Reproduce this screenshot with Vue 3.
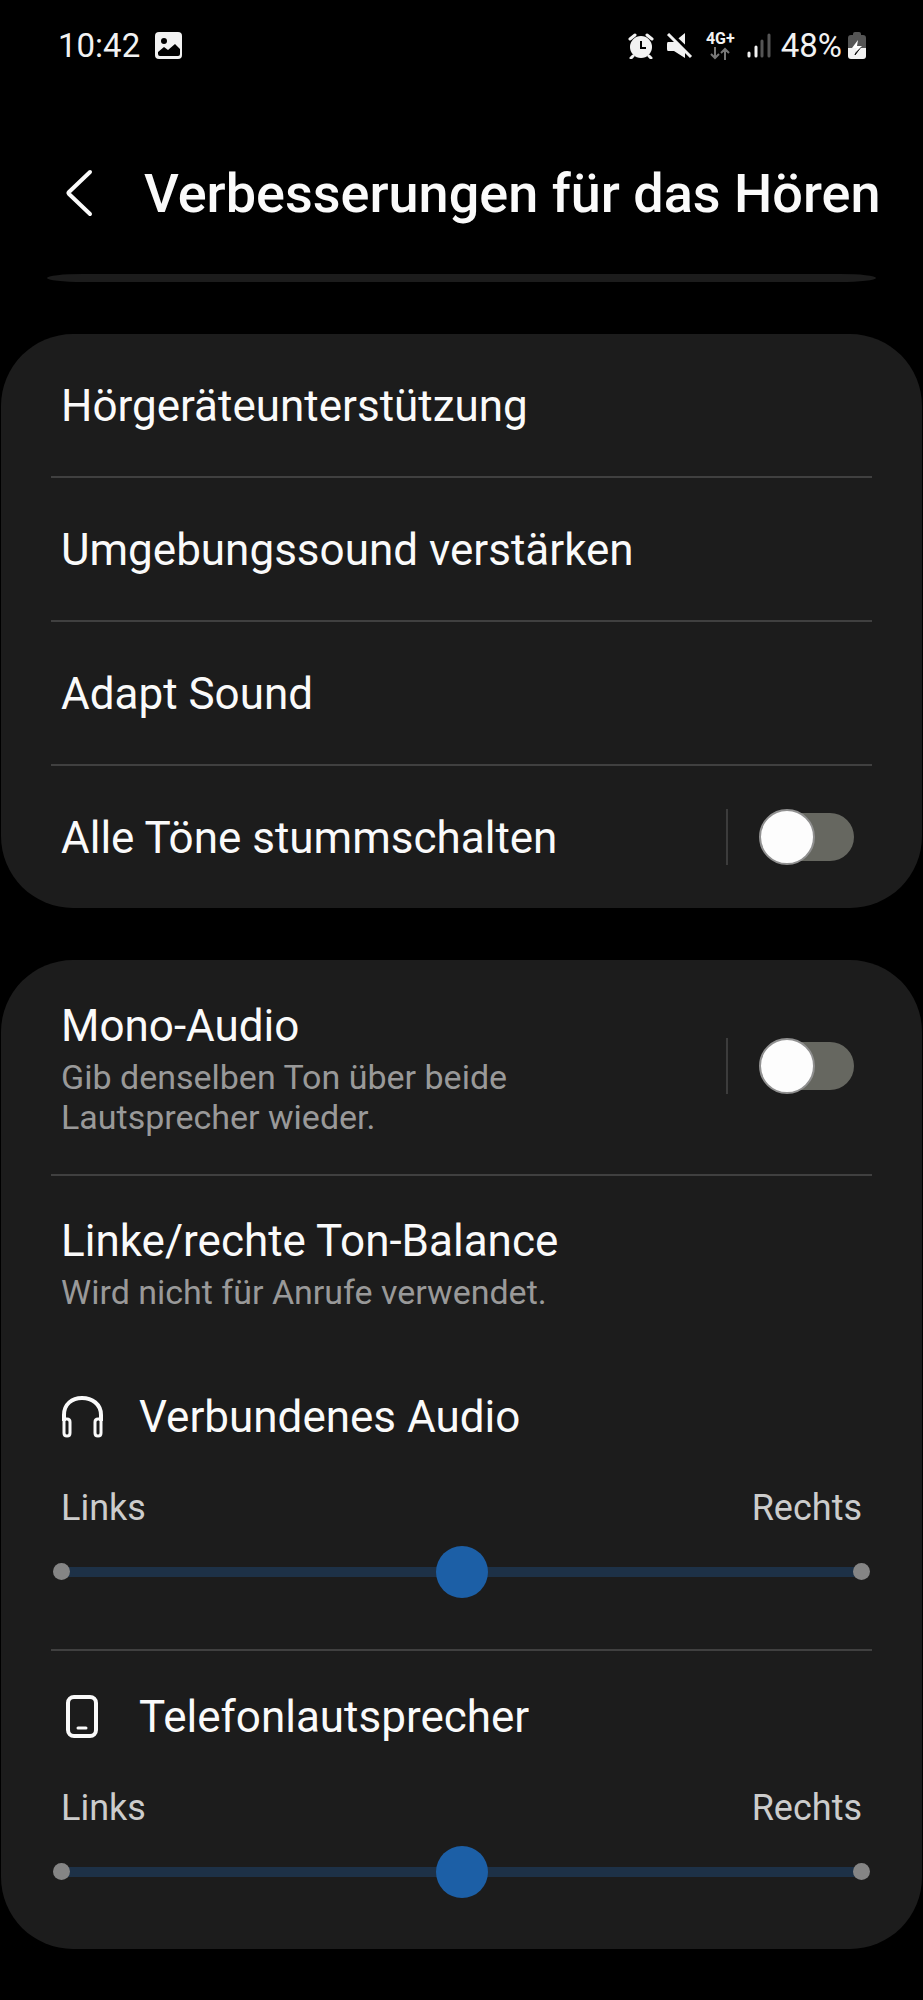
<script setup>
import { ref } from 'vue'

const links = ['Hörgeräteunterstützung', 'Umgebungssound verstärken', 'Adapt Sound']
const muteAll = ref(false)
const mono = ref(false)
const balances = ref([
  { id: 'audio', title: 'Verbundenes Audio', value: 50 },
  { id: 'phone', title: 'Telefonlautsprecher', value: 50 }
])
</script>

<template>
  <div class="page">
    <div class="status">
      <time class="clock">10:42</time>
      <svg class="picture" width="28" height="28" viewBox="0 0 28 28" aria-hidden="true">
        <rect x="0" y="0" width="27" height="27" rx="4" fill="#f2f2f2" />
        <circle cx="9" cy="9" r="3" fill="#000" />
        <path d="M3 20 L9 15 L13 18 L20 12 L25 17 V22 Q25 24 23 24 H5 Q3 24 3 22 Z" fill="#000" />
      </svg>
      <div class="indicators">
        <svg width="26" height="26" viewBox="0 0 26 26" aria-hidden="true">
          <circle cx="13" cy="14" r="11" fill="#f2f2f2" />
          <path d="M2 6 L7 2 M24 6 L19 2 M5 23 L3 25 M21 23 L23 25" stroke="#f2f2f2" stroke-width="3" stroke-linecap="round" />
          <path d="M13 8 V15 H18" fill="none" stroke="#000" stroke-width="2" />
        </svg>
        <svg width="28" height="26" viewBox="0 0 28 26" aria-hidden="true">
          <path d="M2 9 H8 L19 0 V25 L8 18 H2 Q1 18 1 16 V11 Q1 9 2 9 Z" fill="#f2f2f2" />
          <path d="M4 0 L28 23" stroke="#000" stroke-width="4" />
          <path d="M2 1 L25 24" stroke="#f2f2f2" stroke-width="3" />
        </svg>
        <div class="network">
          <span>4G+</span>
          <svg width="20" height="13" viewBox="0 0 20 13" fill="none" stroke="#777" stroke-width="2" aria-hidden="true">
            <path d="M5 0 V11 M1 7 L5 11 L9 7 M15 13 V2 M11 6 L15 2 L19 6" />
          </svg>
        </div>
        <svg width="24" height="26" viewBox="0 0 24 26" stroke-width="3" stroke-linecap="round" aria-hidden="true">
          <path d="M2 20 V23 M9 14 V23" stroke="#f2f2f2" />
          <path d="M15 8 V23 M22 2 V23" stroke="#555" />
        </svg>
        <span class="percent">48%</span>
        <svg width="18" height="28" viewBox="0 0 18 28" aria-hidden="true">
          <path d="M5 3 V2 Q5 0 7 0 H11 Q13 0 13 2 V3 H15 Q18 3 18 6 V17 H0 V6 Q0 3 3 3 Z" fill="#555" />
          <path d="M0 16 H18 V24 Q18 27 15 27 H3 Q0 27 0 24 Z" fill="#f2f2f2" />
          <path d="M13 15 L7 23 L9 18 Z" fill="#111" stroke="#111" stroke-width="1" />
          <path d="M10 8 L4 16 H9 L7 21 L14 14 H9 Z" fill="#fff" />
        </svg>
      </div>
    </div>

    <header class="header">
      <button class="back" type="button" aria-label="Zurück">
        <svg width="28" height="50" viewBox="0 0 28 50" fill="none" stroke="#fafafa" stroke-width="4" stroke-linecap="round" stroke-linejoin="round" aria-hidden="true">
          <path d="M25 4 L4 24 Q3 25 4 26 L25 46" />
        </svg>
      </button>
      <h1>Verbesserungen für das Hören</h1>
    </header>

    <main>
      <div class="sliver"></div>

      <section class="card">
        <a v-for="item in links" :key="item" class="row line" href="#"><span class="text">{{ item }}</span></a>
        <div class="row">
          <label class="text" for="mute">Alle Töne stummschalten</label>
          <div class="switch"><input id="mute" v-model="muteAll" type="checkbox" role="switch"></div>
        </div>
      </section>

      <section class="card">
        <div class="row tall line">
          <div class="text">
            <label for="mono">Mono-Audio</label>
            <p>Gib denselben Ton über beide Lautsprecher wieder.</p>
          </div>
          <div class="switch"><input id="mono" v-model="mono" type="checkbox" role="switch"></div>
        </div>
        <div class="intro">
          <h2>Linke/rechte Ton-Balance</h2>
          <p>Wird nicht für Anrufe verwendet.</p>
        </div>
        <div v-for="(b, i) in balances" :key="b.id" class="balance" :class="{ line: i === 0 }">
          <label class="heading" :for="b.id">
            <svg v-if="b.id === 'audio'" width="44" height="44" viewBox="0 0 44 44" fill="none" stroke="#fafafa" stroke-width="3" aria-hidden="true">
              <path d="M3 26 V20 C3 9 11 3 21 3 S40 9 40 20 V26" stroke-width="4" />
              <path d="M3 24 H6 Q9 24 9 27 V38 Q9 41 6 41 Q3 41 3 38 Z M40 24 H37 Q34 24 34 27 V38 Q34 41 37 41 Q40 41 40 38 Z" />
            </svg>
            <svg v-else width="44" height="44" viewBox="0 0 44 44" fill="none" stroke="#fafafa" stroke-width="4" aria-hidden="true">
              <rect x="7" y="2" width="28" height="39" rx="6" />
              <path d="M17 33 H25" stroke-width="3" stroke-linecap="round" />
            </svg>
            {{ b.title }}
          </label>
          <div class="ends"><span>Links</span><span>Rechts</span></div>
          <div class="slider"><input :id="b.id" v-model="b.value" type="range" min="0" max="100"></div>
        </div>
      </section>
    </main>
  </div>
</template>

<style>
html, body { background: #000; }
</style>

<style scoped>
.page {
  box-sizing: border-box;
  min-height: 100vh;
  padding-bottom: 50px;
  background: #000;
  color: #fafafa;
  font-family: Roboto, "Liberation Sans", sans-serif;
  font-size: 44px;
  line-height: 52px;
}
h1, h2, p { margin: 0; font-weight: 400; font-size: inherit; }
svg { display: block; flex: none; }

.status {
  display: flex;
  align-items: center;
  height: 92px;
  padding: 0 57px 0 58px;
  color: #f2f2f2;
  font-size: 33px;
  line-height: 40px;
}
.picture { margin-left: 15px; }
.indicators { display: flex; align-items: center; margin-left: auto; }
.indicators > * + * { margin-left: 12px; }
.indicators > .percent { margin-left: 10px; }
.indicators > .percent + svg { margin-left: 6px; }
.network { display: flex; flex-direction: column; align-items: center; gap: 2px; }
.network span { font-size: 16px; line-height: 13px; font-weight: 700; }

.header {
  display: flex;
  align-items: center;
  height: 162px;
  margin-top: 20px;
  padding-left: 65px;
}
.back { padding: 0; border: 0; background: none; color: inherit; }
h1 { margin-left: 51px; padding-top: 2px; font-size: 54px; line-height: 64px; font-weight: 500; white-space: nowrap; }

.sliver {
  height: 8px;
  margin: 0 47px;
  border-radius: 36px / 4px;
  background: #1c1c1c;
}
.card {
  margin: 52px 1px 0;
  padding: 0 50px;
  border-radius: 72px;
  background: #1c1c1c;
}
.line { border-bottom: 2px solid #404040; }
.row {
  box-sizing: border-box;
  display: flex;
  align-items: center;
  min-height: 142px;
  padding: 0 18px 0 10px;
  color: inherit;
  text-decoration: none;
}
.row.line { min-height: 144px; }
.row > .text { flex: 1; padding-top: 2px; }
.row.tall { padding-top: 38px; padding-bottom: 37px; }
.tall .switch { margin-bottom: 4px; }
.text p { max-width: 500px; }
.text label { display: block; }
p { margin-top: 5px; color: #999; font-size: 34px; line-height: 40px; }

.switch { display: flex; padding-left: 31px; border-left: 2px solid #3c3c3c; }
.switch input {
  position: relative;
  appearance: none;
  width: 95px;
  height: 56px;
  margin: 0;
}
.switch input::before {
  content: "";
  position: absolute;
  inset: 4px 0 4px 4px;
  border-radius: 24px;
  background: #666760;
}
.switch input::after {
  content: "";
  position: absolute;
  box-sizing: border-box;
  top: 0;
  left: 0;
  width: 56px;
  height: 56px;
  border: 2px solid #909090;
  border-radius: 50%;
  background: #fdfdfd;
}
.switch input:checked::before { background: #1c5fa6; }
.switch input:checked::after { left: auto; right: 0; }

.intro { padding: 39px 10px 39px; }
.balance { padding: 40px 10px 51px; }
.heading { display: flex; align-items: center; gap: 34px; }
.ends {
  display: flex;
  justify-content: space-between;
  margin: 43px 0 16px;
  color: #ccc;
  font-size: 36px;
  line-height: 44px;
}
.slider { position: relative; margin: 0 -26px; }
.slider::before, .slider::after {
  content: "";
  position: absolute;
  top: 17px;
  width: 17px;
  height: 17px;
  border-radius: 50%;
  background: #858585;
}
.slider::before { left: 18px; }
.slider::after { right: 18px; }
.slider input {
  display: block;
  appearance: none;
  width: 100%;
  height: 52px;
  margin: 0;
  background: linear-gradient(#1d3147, #1d3147) center / calc(100% - 52px) 10px no-repeat;
}
.slider input::-webkit-slider-thumb {
  appearance: none;
  width: 52px;
  height: 52px;
  border-radius: 50%;
  background: #1c5fa6;
}
</style>
